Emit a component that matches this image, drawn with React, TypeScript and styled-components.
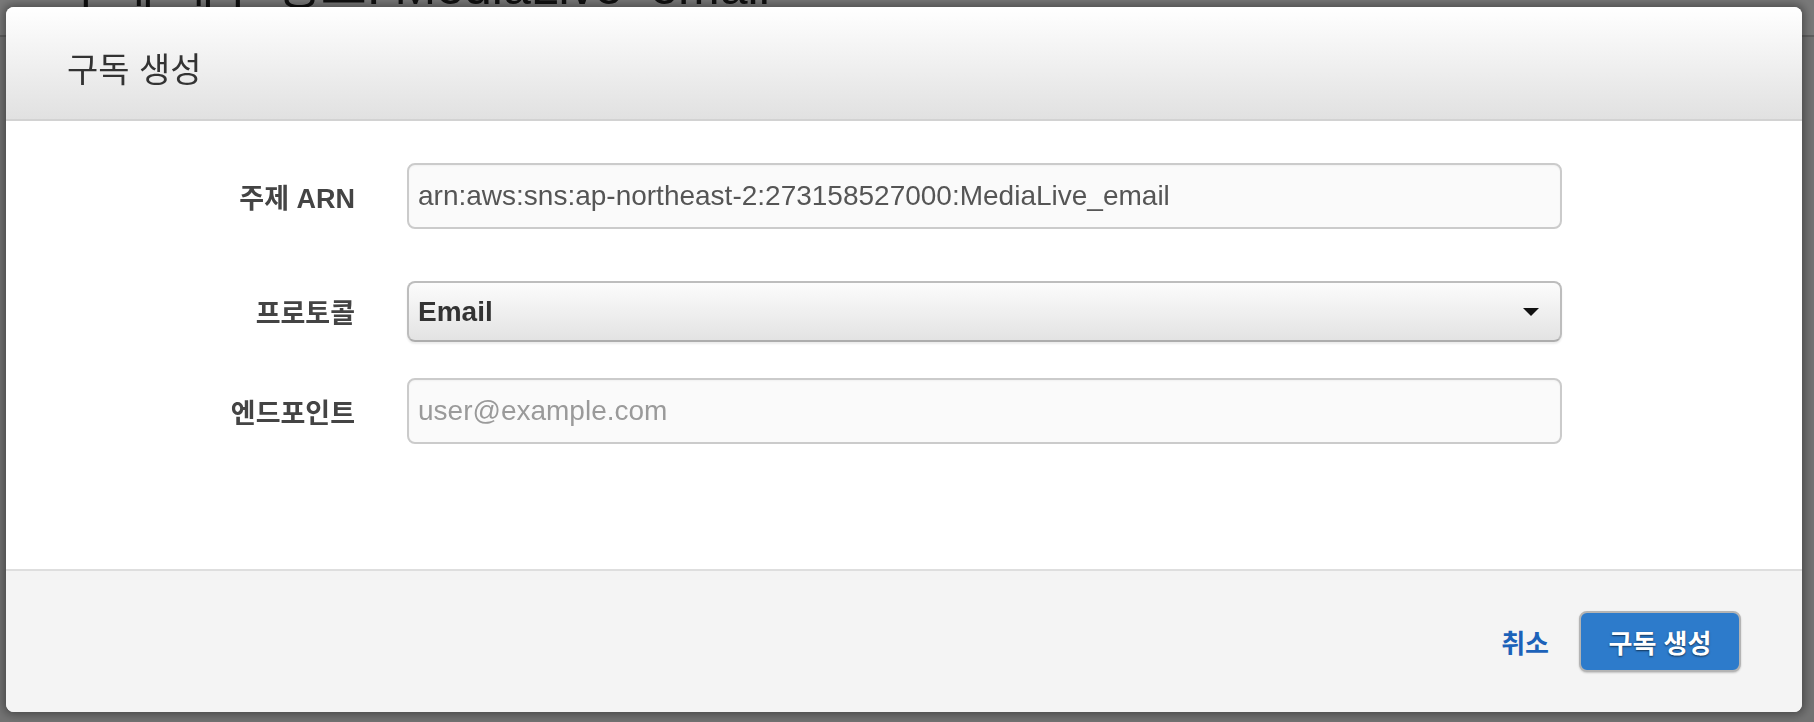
import styled, { createGlobalStyle } from "styled-components";

const GlobalStyle = createGlobalStyle`
  html, body {
    margin: 0;
    padding: 0;
    height: 100%;
    overflow: hidden;
  }
  body {
    font-family: "Liberation Sans", "Noto Sans CJK KR", sans-serif;
    background: #fff;
  }
  * {
    box-sizing: border-box;
  }
`;

const Page = styled.div`
  height: 722px;
  background: #f2f2f2;
`;

const PageHeader = styled.div`
  height: 37px;
  background: #fff;
  border-bottom: 2px solid #c8c8c8;
  overflow: hidden;
`;

const PageTitle = styled.h1`
  margin: -38px 0 0;
  padding-left: 63px;
  font-size: 50px;
  line-height: 50px;
  font-weight: normal;
  color: #222;
`;

const Backdrop = styled.div`
  position: fixed;
  inset: 0;
  background: rgba(0, 0, 0, 0.53);
`;

const Modal = styled.div`
  position: fixed;
  top: 7px;
  left: 6px;
  width: 1796px;
  height: 705px;
  background: #fff;
  border-radius: 8px;
  box-shadow: 0 0 8px 3px rgba(0, 0, 0, 0.35);
  display: flex;
  flex-direction: column;
  overflow: hidden;
`;

const Header = styled.div`
  flex: 0 0 auto;
  height: 114px;
  padding: 14px 61px 0;
  display: flex;
  align-items: center;
  background: linear-gradient(#ffffff, #e1e1e1);
  border-bottom: 2px solid #d2d2d2;
`;

const Title = styled.h2`
  margin: 0;
  font-size: 34px;
  line-height: 1;
  font-weight: normal;
  color: #333;
`;

const Body = styled.div`
  flex: 1 1 auto;
  padding-top: 42px;
`;

const FormRow = styled.div<{ $gap: number }>`
  display: grid;
  grid-template-columns: 349px 1155px;
  column-gap: 52px;
  align-items: center;
  margin-top: ${(p) => p.$gap}px;
`;

const Label = styled.label`
  text-align: right;
  font-size: 27px;
  font-weight: bold;
  color: #444;
`;

const TextInput = styled.input`
  height: 66px;
  width: 100%;
  padding: 0 9px;
  border: 2px solid #cbcbcb;
  border-radius: 8px;
  background: #fafafa;
  box-shadow: inset 0 1px 2px rgba(0, 0, 0, 0.04);
  font-family: "Liberation Sans", "Noto Sans CJK KR", sans-serif;
  font-size: 28px;
  color: #555;
  outline: none;
  &::placeholder {
    color: #9a9a9a;
  }
`;

const SelectBox = styled.div`
  height: 61px;
  padding: 0 21px 0 9px;
  display: flex;
  align-items: center;
  justify-content: space-between;
  border: 2px solid #bdbdbd;
  border-bottom-color: #adadad;
  border-radius: 8px;
  background: linear-gradient(#fcfcfc, #e3e3e3);
  box-shadow: 0 2px 2px rgba(0, 0, 0, 0.08);
  font-size: 28px;
  font-weight: bold;
  color: #333;
`;

const Footer = styled.div`
  flex: 0 0 auto;
  height: 143px;
  padding: 0 61px 0 0;
  display: flex;
  align-items: center;
  justify-content: flex-end;
  gap: 30px;
  background: #f4f4f4;
  border-top: 2px solid #dedede;
`;

const CancelLink = styled.a`
  font-size: 26px;
  font-weight: bold;
  color: #1c62b9;
  cursor: pointer;
`;

const PrimaryButton = styled.button`
  width: 162px;
  height: 61px;
  padding: 0;
  border: 2px solid #b4b4b4;
  border-radius: 8px;
  background: #2d7bcb;
  box-shadow: 0 1px 2px rgba(0, 0, 0, 0.2);
  font-family: "Liberation Sans", "Noto Sans CJK KR", sans-serif;
  font-size: 26px;
  font-weight: bold;
  color: #fff;
  text-shadow: 0 1px 2px rgba(0, 0, 0, 0.6);
  cursor: pointer;
`;

const App = () => {
  return (
    <>
      <GlobalStyle />
      <Page>
        <PageHeader>
          <PageTitle>주제 세부 정보: MediaLive_email</PageTitle>
        </PageHeader>
      </Page>
      <Backdrop />
      <Modal>
        <Header>
          <Title>구독 생성</Title>
        </Header>
        <Body>
          <FormRow $gap={0}>
            <Label>주제 ARN</Label>
            <TextInput
              readOnly
              value="arn:aws:sns:ap-northeast-2:273158527000:MediaLive_email"
            />
          </FormRow>
          <FormRow $gap={52}>
            <Label>프로토콜</Label>
            <SelectBox>
              Email
              <svg width="16" height="8" viewBox="0 0 16 8">
                <polygon points="0,0 16,0 8,8" fill="#111" />
              </svg>
            </SelectBox>
          </FormRow>
          <FormRow $gap={36}>
            <Label>엔드포인트</Label>
            <TextInput readOnly placeholder="user@example.com" />
          </FormRow>
        </Body>
        <Footer>
          <CancelLink>취소</CancelLink>
          <PrimaryButton>구독 생성</PrimaryButton>
        </Footer>
      </Modal>
    </>
  );
};

export default App;
